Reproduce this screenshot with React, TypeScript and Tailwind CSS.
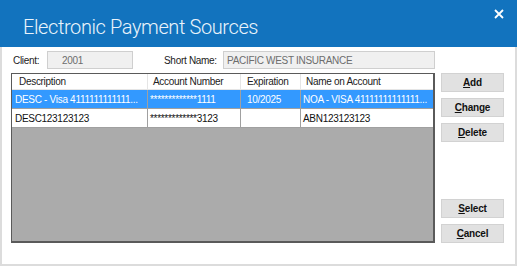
const rows = [
  { desc: "DESC - Visa 4111111111111...", acct: "*************1111", exp: "10/2025", name: "NOA - VISA 41111111111111...", selected: true },
  { desc: "DESC123123123", acct: "*************3123", exp: "", name: "ABN123123123", selected: false },
];

const DlgButton = ({ label }: { label: string }) => (
  <button className="w-[63px] h-[19px] bg-[#e1e1e1] border border-[#d2d2d2] text-[10px] font-bold text-[#111] leading-none tracking-[-0.2px]">
    <span className="underline underline-offset-1">{label[0]}</span>
    {label.slice(1)}
  </button>
);

export default function App() {
  return (
    <div
      className="w-[517px] h-[268px] bg-white overflow-hidden"
      style={{ fontFamily: "'Liberation Sans', Arial, sans-serif" }}
    >
      <div className="h-[266px] border-l-2 border-r-2 border-b-2 border-[#dcdcdc] flex flex-col">
        {/* Title bar */}
        <div className="h-[47px] -mx-[2px] bg-[#1273be] flex items-start justify-between">
          <div
            className="pl-[23px] pt-[17px] text-[20px] tracking-[-0.4px] text-[#eaf3fb] leading-none"
            style={{ fontFamily: "Roboto, 'Liberation Sans', sans-serif", fontWeight: 300 }}
          >
            Electronic Payment Sources
          </div>
          <svg width="10" height="10" viewBox="0 0 10 10" className="mt-[9px] mr-[13px]">
            <path d="M1 1 L9 9 M9 1 L1 9" stroke="white" strokeWidth="1.8" />
          </svg>
        </div>

        {/* Client row */}
        <div className="flex items-center h-[18px] mt-[4px] text-[10px] tracking-[-0.3px] text-[#222] whitespace-nowrap">
          <span className="ml-[11px] w-[34px]">Client:</span>
          <div className="w-[86px] h-[18px] bg-[#f0f0f0] border border-[#cfcfcf] text-[#6d6d6d] pl-[14px] flex items-center">
            2001
          </div>
          <span className="ml-[31px] w-[59px]">Short Name:</span>
          <div className="w-[212px] h-[18px] bg-[#f0f0f0] border border-[#cfcfcf] text-[#6d6d6d] pl-[3px] flex items-center">
            PACIFIC WEST INSURANCE
          </div>
        </div>

        {/* Grid + buttons */}
        <div className="flex mt-[4px]">
          <div className="ml-[9px] w-[424px] h-[170px] bg-[#ababab] border border-[#5a5a5a] border-r-2 border-b-2 flex flex-col text-[10px] tracking-[-0.3px]">
            <div className="flex h-[16px] bg-white text-[#222] border-b border-[#e5e5e5]">
              <div className="w-[136px] pl-[7px] border-r border-[#e5e5e5] flex items-center">Description</div>
              <div className="w-[93px] pl-[5px] border-r border-[#e5e5e5] flex items-center">Account Number</div>
              <div className="w-[60px] pl-[6px] border-r border-[#e5e5e5] flex items-center">Expiration</div>
              <div className="flex-1 pl-[5px] flex items-center">Name on Account</div>
            </div>
            {rows.map((r, i) => (
              <div
                key={i}
                className={`flex h-[19px] border-b border-[#a0a0a0] ${r.selected ? "bg-[#3399ff] text-white" : "bg-white text-[#111]"}`}
              >
                <div className="w-[136px] pl-[3px] border-r border-[#a0a0a0] flex items-center whitespace-nowrap overflow-hidden">{r.desc}</div>
                <div className="w-[93px] pl-[2px] border-r border-[#a0a0a0] flex items-center whitespace-nowrap overflow-hidden">{r.acct}</div>
                <div className="w-[60px] pl-[6px] border-r border-[#a0a0a0] flex items-center">{r.exp}</div>
                <div className="flex-1 pl-[2px] flex items-center whitespace-nowrap overflow-hidden">{r.name}</div>
              </div>
            ))}
          </div>

          <div className="ml-[6px] flex flex-col">
            <div className="flex flex-col gap-[6px]">
              <DlgButton label="Add" />
              <DlgButton label="Change" />
              <DlgButton label="Delete" />
            </div>
            <div className="flex flex-col gap-[6px] mt-[57px]">
              <DlgButton label="Select" />
              <DlgButton label="Cancel" />
            </div>
          </div>
        </div>
      </div>
    </div>
  );
}
